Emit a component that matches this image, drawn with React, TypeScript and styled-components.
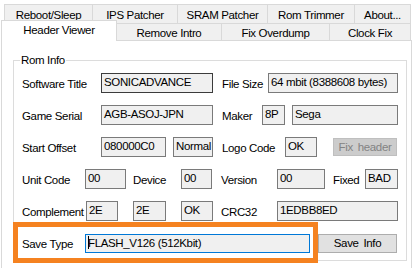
import React from 'react';
import styled, { createGlobalStyle } from 'styled-components';

const GlobalStyle = createGlobalStyle`
    body {
        margin: 0;
        background: #ffffff;
        font-family: "Liberation Sans", Arial, sans-serif;
        font-size: 11.5px;
        letter-spacing: -0.35px;
        color: #000000;
    }
    * {
        box-sizing: border-box;
    }
`;

const Window = styled.div`
    width: 415px;
    height: 268px;
    overflow: hidden;
    background: #ffffff;
    padding-top: 4px;
`;

const BackRow = styled.div`
    display: flex;
    margin-left: 4px;
    height: 19px;
`;

const FrontRow = styled.div`
    display: flex;
    align-items: flex-end;
    margin-left: 1px;
    height: 17px;
`;

const Tab = styled.div<{ $w: number; $first?: boolean }>`
    width: ${p => p.$w}px;
    height: 100%;
    display: flex;
    align-items: center;
    justify-content: center;
    background: #f0f0f0;
    border-top: 1px solid #d9d9d9;
    border-right: 1px solid #d9d9d9;
    border-left: ${p => (p.$first ? '1px solid #d9d9d9' : 'none')};
    padding-top: 1px;
`;

const ActiveTab = styled.div<{ $w: number }>`
    position: relative;
    z-index: 2;
    width: ${p => p.$w}px;
    height: 21px;
    margin-bottom: -1px;
    display: flex;
    align-items: center;
    justify-content: center;
    background: #ffffff;
    border: 1px solid #d9d9d9;
    border-bottom: none;
    padding-bottom: 2px;
`;

const Panel = styled.div`
    width: 411px;
    height: 240px;
    margin-left: 1px;
    background: #ffffff;
    border: 1px solid #d9d9d9;
    padding: 19px 0 0 11px;
`;

const GroupBox = styled.div`
    position: relative;
    width: 394px;
    height: 201px;
    border: 1px solid #dcdcdc;
    padding: 12px 0 0 8px;
    display: flex;
    flex-direction: column;
    gap: 12px;
`;

const Caption = styled.span`
    position: absolute;
    top: -8px;
    left: 6px;
    padding: 0 1px;
    background: #ffffff;
    line-height: 14px;
`;

const Row = styled.div`
    display: flex;
    align-items: center;
    height: 20px;
`;

const Label = styled.span<{ $w: number; $ml?: number }>`
    width: ${p => p.$w}px;
    margin-left: ${p => p.$ml || 0}px;
    flex: none;
    white-space: nowrap;
    padding-top: 1px;
`;

const Box = styled.div<{ $w: number; $ml?: number; $dark?: boolean }>`
    width: ${p => p.$w}px;
    height: 20px;
    margin-left: ${p => p.$ml || 0}px;
    flex: none;
    background: #f0f0f0;
    border: 1px solid ${p => (p.$dark ? '#3c3c3c' : '#7a7a7a')};
    padding: 1px 0 0 2px;
    line-height: 15px;
    white-space: nowrap;
    overflow: hidden;
`;

const SaveField = styled.div`
    width: 225px;
    height: 19px;
    flex: none;
    display: flex;
    align-items: center;
    background: #f0f0f0;
    border: 1px solid #0078d7;
    padding: 0 0 1px 2px;
    white-space: nowrap;
`;

const Caret = styled.span`
    display: inline-block;
    width: 1px;
    height: 13px;
    background: #000000;
    margin-right: -1px;
`;

const Button = styled.div<{ $w: number; $ml?: number; $disabled?: boolean }>`
    width: ${p => p.$w}px;
    height: ${p => (p.$disabled ? 18 : 19)}px;
    margin-left: ${p => p.$ml || 0}px;
    flex: none;
    display: flex;
    align-items: center;
    justify-content: center;
    background: ${p => (p.$disabled ? '#cccccc' : '#e1e1e1')};
    border: 1px solid ${p => (p.$disabled ? '#bfbfbf' : '#adadad')};
    color: ${p => (p.$disabled ? '#838383' : '#000000')};
    word-spacing: 2px;
`;

const Highlight = styled.div`
    position: absolute;
    left: -1px;
    top: 161px;
    width: 305px;
    height: 41px;
    border: 5px solid #f58220;
    pointer-events: none;
`;

const backTabs = [
    { name: 'Reboot/Sleep', w: 89 },
    { name: 'IPS Patcher', w: 85 },
    { name: 'SRAM Patcher', w: 90 },
    { name: 'Rom Trimmer', w: 87 },
    { name: 'About...', w: 56 },
];

const frontTabs = [
    { name: 'Remove Intro', w: 105 },
    { name: 'Fix Overdump', w: 108 },
    { name: 'Clock Fix', w: 81 },
];

const App = () => {
    return (
        <>
            <GlobalStyle />
            <Window>
                <BackRow>
                    {backTabs.map((t, i) => (
                        <Tab key={t.name} $w={t.w} $first={i === 0}>{t.name}</Tab>
                    ))}
                </BackRow>
                <FrontRow>
                    <ActiveTab $w={116}>Header Viewer</ActiveTab>
                    {frontTabs.map(t => (
                        <Tab key={t.name} $w={t.w}>{t.name}</Tab>
                    ))}
                </FrontRow>
                <Panel>
                    <GroupBox>
                        <Caption>Rom Info</Caption>
                        <Row>
                            <Label $w={79}>Software Title</Label>
                            <Box $w={112} $dark>SONICADVANCE</Box>
                            <Label $w={46} $ml={9}>File Size</Label>
                            <Box $w={130}>64 mbit (8388608 bytes)</Box>
                        </Row>
                        <Row>
                            <Label $w={79}>Game Serial</Label>
                            <Box $w={112}>AGB-ASOJ-JPN</Box>
                            <Label $w={40} $ml={9}>Maker</Label>
                            <Box $w={23}>8P</Box>
                            <Box $w={106} $ml={7}>Sega</Box>
                        </Row>
                        <Row>
                            <Label $w={79}>Start Offset</Label>
                            <Box $w={65}>080000C0</Box>
                            <Box $w={40} $ml={7}>Normal</Box>
                            <Label $w={63} $ml={9}>Logo Code</Label>
                            <Box $w={32}>OK</Box>
                            <Button $w={64} $ml={16} $disabled>Fix header</Button>
                        </Row>
                        <Row>
                            <Label $w={63}>Unit Code</Label>
                            <Box $w={41}>00</Box>
                            <Label $w={48} $ml={7}>Device</Label>
                            <Box $w={31}>00</Box>
                            <Label $w={56} $ml={9}>Version</Label>
                            <Box $w={48}>00</Box>
                            <Label $w={32} $ml={8}>Fixed</Label>
                            <Box $w={33}>BAD</Box>
                        </Row>
                        <Row>
                            <Label $w={64}>Complement</Label>
                            <Box $w={32}>2E</Box>
                            <Box $w={33} $ml={15}>2E</Box>
                            <Box $w={32} $ml={15}>OK</Box>
                            <Label $w={56} $ml={8}>CRC32</Label>
                            <Box $w={121}>1EDBB8ED</Box>
                        </Row>
                        <Row>
                            <Label $w={63}>Save Type</Label>
                            <SaveField><Caret />FLASH_V126 (512Kbit)</SaveField>
                            <Button $w={79} $ml={8}>Save Info</Button>
                        </Row>
                        <Highlight />
                    </GroupBox>
                </Panel>
            </Window>
        </>
    );
};

export default App;
